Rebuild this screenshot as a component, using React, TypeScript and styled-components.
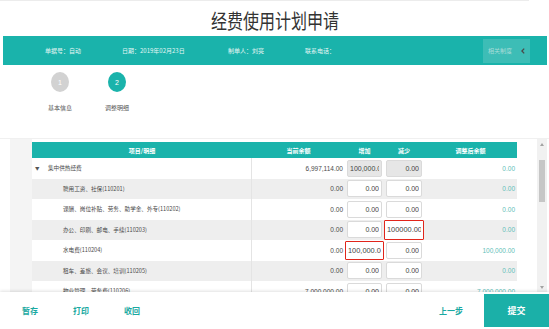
import React from "react";
import styled, { createGlobalStyle, css } from "styled-components";

const TEAL = "#1ab3ab";

const GlobalStyle = createGlobalStyle`
  html, body { margin: 0; padding: 0; background: #fff; }
  body {
    width: 549px; height: 329px; overflow: hidden;
    font-family: "Noto Sans CJK SC", "Liberation Sans", sans-serif;
  }
  * { box-sizing: border-box; }
`;

const Page = styled.div`
  width: 549px;
  height: 329px;
  display: flex;
  flex-direction: column;
  overflow: hidden;
`;

const TopRule = styled.div`
  height: 2px;
  border-top: 1px solid #ececec;
  margin-right: 20px;
`;

const TitleBar = styled.div`
  height: 34px;
  padding-top: 3px;
  display: flex;
  align-items: center;
  justify-content: center;
`;

const Title = styled.h1`
  margin: 0;
  display: inline-block;
  font-size: 20px;
  line-height: 1;
  font-weight: 400;
  color: #333;
  transform: scaleX(0.8);
`;

const InfoBar = styled.div`
  height: 29px;
  margin: 0 2px 0 3px;
  background: ${TEAL};
  display: grid;
  grid-template-columns: 77px 106px 77px 1fr auto;
  align-items: center;
  padding: 0 17px 0 42px;
`;

const InfoItem = styled.span`
  font-size: 6px;
  color: #e4f6f4;
  white-space: nowrap;
`;

const RelatedButton = styled.div`
  width: 47px;
  height: 24px;
  background: #3dbdb6;
  display: flex;
  align-items: center;
  padding-left: 5px;
  gap: 9px;
  font-size: 6px;
  color: #a7dcd8;
  white-space: nowrap;
`;

const Steps = styled.div`
  height: 73px;
  display: flex;
  gap: 17px;
  padding: 7px 0 0 40px;
`;

const Step = styled.div`
  width: 40px;
  display: flex;
  flex-direction: column;
  align-items: center;
`;

const StepDot = styled.div<{ $active?: boolean }>`
  width: 18px;
  height: 20px;
  border-radius: 50%;
  background: ${(p) => (p.$active ? TEAL : "#d2d2d2")};
  color: #fff;
  font: 400 7px "Liberation Sans", sans-serif;
  display: flex;
  align-items: center;
  justify-content: center;
`;

const StepLabel = styled.div`
  margin-top: 12px;
  font-size: 6px;
  line-height: 8px;
  color: #555;
`;

const TableSection = styled.div`
  height: 154px;
  display: flex;
  padding: 0 2px 0 10px;
  border-top: 1px solid #f0f0f0;
`;

const Gutter = styled.div`
  width: 22px;
  background: #f4f4f4;
`;

const TableArea = styled.div`
  width: 485px;
  overflow: hidden;
  padding-top: 3px;
`;

const Spacer = styled.div`
  flex: 1;
`;

const COLS = "220px 93px 39px 40px 93px";

const HeadRow = styled.div`
  display: grid;
  grid-template-columns: ${COLS};
  height: 16px;
  background: ${TEAL};
  align-items: center;
`;

const HeadCell = styled.div`
  text-align: center;
  color: #fff;
  font-size: 6px;
  font-weight: 700;
  white-space: nowrap;
`;

const BodyRow = styled.div<{ $striped?: boolean }>`
  display: grid;
  grid-template-columns: ${COLS};
  height: 20.5px;
  background: ${(p) => (p.$striped ? "#eeeeee" : "#fff")};
  align-items: center;
`;

const NameCell = styled.div<{ $level: number }>`
  height: 100%;
  display: flex;
  align-items: center;
  padding-left: ${(p) => (p.$level === 0 ? 3 : 31)}px;
  border-right: 1px solid #e4e4e4;
  font-size: 5.6px;
  color: #4a4a4a;
  white-space: nowrap;
`;

const Caret = styled.span`
  width: 13px;
  font-size: 4.5px;
  color: #555;
`;

const NumberCell = styled.div<{ $result?: boolean }>`
  text-align: right;
  padding-right: 2px;
  font: 400 6.5px "Liberation Sans", sans-serif;
  color: ${(p) => (p.$result ? "#5fc0b9" : "#4a4a4a")};
  white-space: nowrap;
`;

const InputCell = styled.div<{ $error?: boolean }>`
  padding: ${(p) => (p.$error ? "0" : "0 2px")};
  display: flex;
  align-items: center;
`;

const AmountInput = styled.input<{ $disabled?: boolean; $error?: boolean }>`
  width: 100%;
  height: 17px;
  margin: 0;
  border: 1px solid #dadada;
  border-radius: 2px;
  background: ${(p) => (p.$disabled ? "#e6e6e6" : "#fff")};
  font: 400 7px "Liberation Sans", sans-serif;
  color: #444;
  text-align: right;
  padding: 0 2px;
  outline: none;
  ${(p) =>
    p.$error &&
    css`
      height: 19.5px;
      border: 1.5px solid #e1251b;
      border-radius: 1px;
      font-size: 7.4px;
    `}
`;

const ScrollTrack = styled.div`
  width: 10px;
  background: #f1f1f1;
  display: flex;
  flex-direction: column;
  align-items: center;
`;

const ScrollArrow = styled.div<{ $down?: boolean }>`
  height: 10px;
  display: flex;
  align-items: center;
  justify-content: center;
  &::before {
    content: "";
    border-left: 2.5px solid transparent;
    border-right: 2.5px solid transparent;
    ${(p) =>
      p.$down
        ? "border-top: 3px solid #a3a3a3;"
        : "border-bottom: 3px solid #a3a3a3;"}
  }
`;

const ScrollThumb = styled.div`
  width: 6px;
  height: 42px;
  margin-top: 11px;
  background: #c6c6c6;
`;

const ScrollFill = styled.div`
  flex: 1;
`;

const Footer = styled.div`
  height: 37px;
  display: flex;
  align-items: center;
  background: #fff;
  box-shadow: 0 -1px 3px rgba(0, 0, 0, 0.12);
`;

const LeftActions = styled.div`
  display: flex;
  gap: 35px;
  padding-left: 22px;
  margin-right: auto;
`;

const TextAction = styled.span`
  font-size: 8px;
  font-weight: 700;
  color: #1aa9a1;
  white-space: nowrap;
`;

const PrevAction = styled(TextAction)`
  margin-right: 21px;
`;

const SubmitButton = styled.div`
  width: 65px;
  height: 33px;
  background: #1bb0a8;
  color: #fff;
  font-size: 9px;
  font-weight: 700;
  display: flex;
  align-items: center;
  justify-content: center;
`;

type Row = {
  name: string;
  level: number;
  balance: string;
  inc: string;
  dec: string;
  result: string;
  disabled?: boolean;
  incError?: boolean;
  decError?: boolean;
};

const rows: Row[] = [
  { name: "集中供热经费", level: 0, balance: "6,997,114.00", inc: "100,000.00", dec: "0.00", result: "0.00", disabled: true },
  { name: "聘用工资、社保(110201)", level: 1, balance: "0.00", inc: "0.00", dec: "0.00", result: "0.00" },
  { name: "课酬、岗位补贴、劳务、助学金、外专(110202)", level: 1, balance: "0.00", inc: "0.00", dec: "0.00", result: "0.00" },
  { name: "办公、印刷、邮电、手续(110203)", level: 1, balance: "0.00", inc: "0.00", dec: "100000.00", result: "0.00", decError: true },
  { name: "水电费(110204)", level: 1, balance: "0.00", inc: "100,000.00", dec: "0.00", result: "100,000.00", incError: true },
  { name: "租车、差旅、会议、培训(110205)", level: 1, balance: "0.00", inc: "0.00", dec: "0.00", result: "0.00" },
  { name: "物业管理、劳务费(110206)", level: 1, balance: "7,000,000.00", inc: "0.00", dec: "0.00", result: "7,000,000.00" },
];

const ChevronLeft = () => (
  <svg width="4" height="6" viewBox="0 0 4 6">
    <polyline points="3.2,0.6 0.9,3 3.2,5.4" fill="none" stroke="#4a4a4a" strokeWidth="1.3" />
  </svg>
);

export default function App() {
  return (
    <Page>
      <GlobalStyle />
      <TopRule />
      <TitleBar>
        <Title>经费使用计划申请</Title>
      </TitleBar>
      <InfoBar>
        <InfoItem>单据号：自动</InfoItem>
        <InfoItem>日期：2019年02月23日</InfoItem>
        <InfoItem>制单人：刘亮</InfoItem>
        <InfoItem>联系电话：</InfoItem>
        <RelatedButton>
          相关制度
          <ChevronLeft />
        </RelatedButton>
      </InfoBar>
      <Steps>
        <Step>
          <StepDot>1</StepDot>
          <StepLabel>基本信息</StepLabel>
        </Step>
        <Step>
          <StepDot $active>2</StepDot>
          <StepLabel>调整明细</StepLabel>
        </Step>
      </Steps>
      <TableSection>
        <Gutter />
        <TableArea>
          <HeadRow>
            <HeadCell>项目/明细</HeadCell>
            <HeadCell>当前余额</HeadCell>
            <HeadCell>增加</HeadCell>
            <HeadCell>减少</HeadCell>
            <HeadCell>调整后余额</HeadCell>
          </HeadRow>
          {rows.map((r, i) => (
            <BodyRow key={r.name} $striped={i % 2 === 1}>
              <NameCell $level={r.level}>
                {r.level === 0 && <Caret>▼</Caret>}
                {r.name}
              </NameCell>
              <NumberCell>{r.balance}</NumberCell>
              <InputCell $error={r.incError}>
                <AmountInput readOnly value={r.inc} $disabled={r.disabled} $error={r.incError} />
              </InputCell>
              <InputCell $error={r.decError}>
                <AmountInput readOnly value={r.dec} $disabled={r.disabled} $error={r.decError} />
              </InputCell>
              <NumberCell $result>{r.result}</NumberCell>
            </BodyRow>
          ))}
        </TableArea>
        <Spacer />
        <ScrollTrack>
          <ScrollArrow />
          <ScrollThumb />
          <ScrollFill />
          <ScrollArrow $down />
        </ScrollTrack>
      </TableSection>
      <Footer>
        <LeftActions>
          <TextAction>暂存</TextAction>
          <TextAction>打印</TextAction>
          <TextAction>收回</TextAction>
        </LeftActions>
        <PrevAction>上一步</PrevAction>
        <SubmitButton>提交</SubmitButton>
      </Footer>
    </Page>
  );
}
